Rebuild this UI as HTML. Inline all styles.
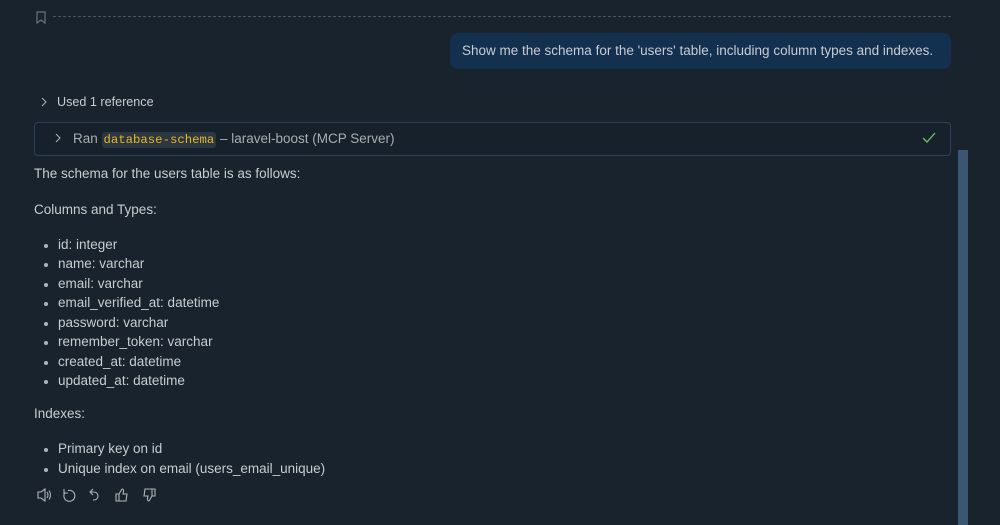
<!DOCTYPE html>
<html><head><style>
body{margin:0;width:1000px;height:525px;background:#18232d;font-family:"Liberation Sans",sans-serif;color:#c8ccd0;font-size:13.5px;position:relative;overflow:hidden}
.a{position:absolute}
.dash{left:53px;top:16px;width:898px;border-top:1px dashed #4a5560}
.bub{left:450px;top:33px;width:501px;height:36px;background:#14304f;border-radius:8px;box-sizing:border-box;padding:10px 0 0 12px;color:#c8ccd0;white-space:nowrap}
.tool{left:34px;top:122px;width:917px;height:34px;border:1px solid #2c4256;border-radius:4px;box-sizing:border-box;background:#17212b}
.code{font-family:"Liberation Mono",monospace;font-size:12.3px;color:#e8b923;background:#2b3640;border-radius:3px;padding:1px 2px}
.sb{left:958px;top:150px;width:10px;height:375px;background:#3b5670}
ul{margin:0;padding:0;list-style:none}
li{position:absolute;left:58px;white-space:nowrap}
li:before{content:"";position:absolute;left:-14px;top:7px;width:4px;height:4px;border-radius:50%;background:#b0b4b8}
</style></head><body>
<svg class="a" style="left:36px;top:11px" width="10" height="13" viewBox="0 0 10 13"><path d="M1 1h8v11l-4-3-4 3z" fill="none" stroke="#6a737c" stroke-width="1.2"/></svg>
<div class="a dash"></div>
<div class="a bub">Show me the schema for the 'users' table, including column types and indexes.</div>
<svg class="a" style="left:40px;top:97px" width="8" height="10" viewBox="0 0 8 10"><path d="M2 1l4 4-4 4" fill="none" stroke="#aaa" stroke-width="1.1"/></svg>
<div class="a" style="left:57px;top:95px;font-size:12.6px">Used 1 reference</div>
<div class="a tool"></div>
<svg class="a" style="left:54px;top:133px" width="8" height="10" viewBox="0 0 8 10"><path d="M2 1l4 4-4 4" fill="none" stroke="#aaa" stroke-width="1.1"/></svg>
<div class="a" style="left:73px;top:131px;color:#a8adb2;white-space:nowrap">Ran <span class="code">database-schema</span> – laravel-boost (MCP Server)</div>
<svg class="a" style="left:922px;top:132px" width="14" height="12" viewBox="0 0 14 12"><path d="M1 6l4 4 8-9" fill="none" stroke="#6cc56c" stroke-width="1.3"/></svg>
<div class="a sb"></div>
<div class="a" style="left:34px;top:166px">The schema for the users table is as follows:</div>
<div class="a" style="left:34px;top:202px">Columns and Types:</div>
<ul>
<li style="top:237px">id: integer</li>
<li style="top:256px">name: varchar</li>
<li style="top:276px">email: varchar</li>
<li style="top:295px">email_verified_at: datetime</li>
<li style="top:315px">password: varchar</li>
<li style="top:334px">remember_token: varchar</li>
<li style="top:354px">created_at: datetime</li>
<li style="top:373px">updated_at: datetime</li>
<li style="top:441px">Primary key on id</li>
<li style="top:461px">Unique index on email (users_email_unique)</li>
</ul>
<div class="a" style="left:34px;top:406px">Indexes:</div>
<svg class="a" style="left:37px;top:487px" width="125" height="16" viewBox="0 0 125 16" fill="none" stroke="#b0b4b8" stroke-width="1.1">
<path d="M1 5h3l4-3v12l-4-3H1z"/><path d="M10 5q2 3 0 6M12 3.5q3 4.5 0 9"/>
<path d="M31 3.5a5.5 5.5 0 1 1-3 2M27 2v4h4"/>
<path d="M56 2l-3 3 3 3M53 5h4a4 4 0 0 1 0 8h-1"/>
<path d="M79 7h3v7h-3zM82 7l3-5q2 0 1.5 3l-.5 2h4l-1 7h-7"/>
<path d="M115 9h3V2h-3zM115 9l-3 5q-2 0-1.5-3l.5-2h-4l1-7h7"/>
</svg>
</body></html>
